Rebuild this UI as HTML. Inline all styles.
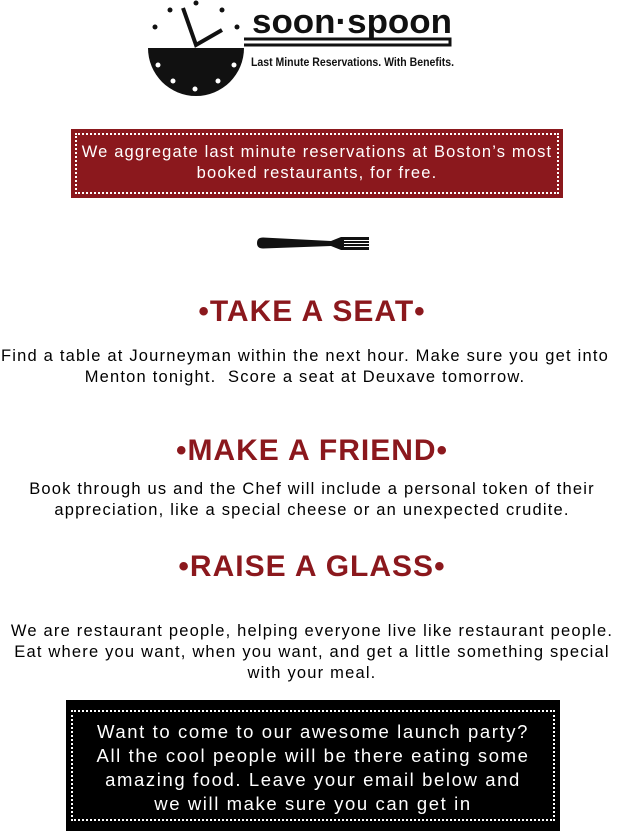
<!DOCTYPE html>
<html><head><style>
body{margin:0;width:624px;height:831px;overflow:hidden;background:#fff;font-family:"Liberation Sans",sans-serif;position:relative}
.a{position:absolute}
.red{left:71px;top:129px;width:492px;height:69px;background:#8b181d}
.red .in{position:absolute;left:4px;top:4px;right:4px;bottom:4px;border:2px dotted #fff;color:#fff;text-align:center;font-size:16.5px;letter-spacing:1.15px;line-height:21px;padding-top:7px}
h2{position:absolute;left:0;width:624px;margin:0;text-align:center;color:#8b181d;font-size:30px;font-weight:bold;letter-spacing:1px}
p{position:absolute;left:-10px;width:644px;margin:0;text-align:center;font-size:16.5px;letter-spacing:1.2px;line-height:21px;color:#000}
.blk{left:66px;top:700px;width:494px;height:131px;background:#000}
.blk .in{position:absolute;left:5px;top:10px;right:5px;bottom:10px;border:2px dotted #fff;color:#fff;text-align:center;font-size:18.5px;letter-spacing:1.6px;line-height:24px;padding-top:8px}
</style></head><body>
<svg class="a" style="left:0;top:0" width="624" height="110">
<path d="M148 48 L244 48 A48 48 0 0 1 148 48 Z" fill="#111"/>
<g fill="#111"><circle cx="196" cy="3" r="2.5"/><circle cx="170" cy="10" r="2.5"/><circle cx="222" cy="10" r="2.5"/><circle cx="155" cy="27" r="2.5"/><circle cx="237" cy="27" r="2.5"/></g>
<g fill="#fff"><circle cx="158" cy="65" r="2.5"/><circle cx="234" cy="65" r="2.5"/><circle cx="173" cy="81" r="2.5"/><circle cx="218" cy="81" r="2.5"/><circle cx="195" cy="89" r="2.5"/></g>
<path d="M183 8 L196 45 L222 30" stroke="#111" stroke-width="4" fill="none"/>
<path d="M244 45 L450 45 L450 39 L244 39" stroke="#111" stroke-width="3" fill="none"/>
<text x="252" y="33" font-family="Liberation Sans Narrow, Liberation Sans, sans-serif" font-weight="bold" font-size="34" fill="#111" textLength="200" lengthAdjust="spacingAndGlyphs">soon·spoon</text>
<text x="251" y="66" font-family="Liberation Sans Narrow, Liberation Sans, sans-serif" font-weight="bold" font-size="12" fill="#111" textLength="203" lengthAdjust="spacingAndGlyphs">Last Minute Reservations. With Benefits.</text>
</svg>
<div class="a red"><div class="in">We aggregate last minute reservations at Boston’s most<br>booked restaurants, for free.</div></div>
<svg class="a" style="left:255px;top:234px" width="116" height="20">
<path d="M8 3.5 Q2 3.5 2 9 Q2 14.5 8 14.5 L76 12 L86 16 L114 16 L114 3 L86 3 L76 7 Z" fill="#111"/>
<path d="M89 6.5H114M89 9.5H114M89 12.5H114" stroke="#fff" stroke-width="1"/>
</svg>
<h2 style="top:295px">•TAKE A SEAT•</h2>
<p style="top:346px;left:-17px">Find a table at Journeyman within the next hour. Make sure you get into<br>Menton tonight.&nbsp; Score a seat at Deuxave tomorrow.</p>
<h2 style="top:434px">•MAKE A FRIEND•</h2>
<p style="top:479px">Book through us and the Chef will include a personal token of their<br>appreciation, like a special cheese or an unexpected crudite.</p>
<h2 style="top:550px">•RAISE A GLASS•</h2>
<p style="top:621px">We are restaurant people, helping everyone live like restaurant people.<br>Eat where you want, when you want, and get a little something special<br>with your meal.</p>
<div class="a blk"><div class="in">Want to come to our awesome launch party?<br>All the cool people will be there eating some<br>amazing food. Leave your email below and<br>we will make sure you can get in</div></div>
</body></html>
